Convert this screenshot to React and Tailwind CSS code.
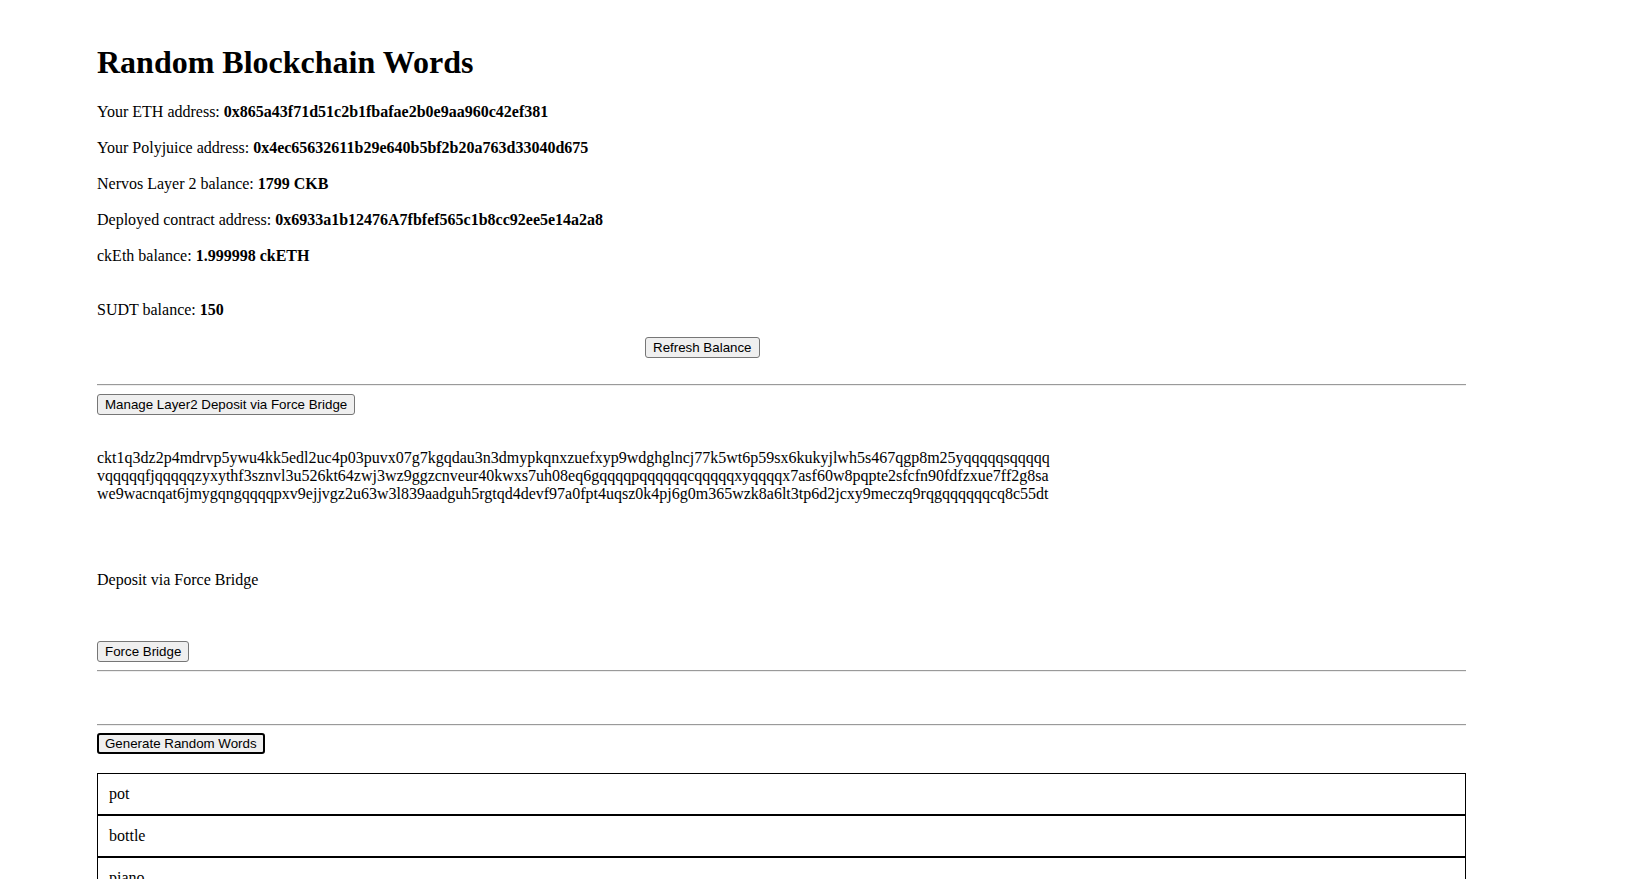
import React from 'react';

const base =
  'h-[21px] rounded-[3px] bg-[#efefef] text-[13.333px] leading-[17px] text-black font-["Liberation_Sans",Arial,sans-serif] whitespace-nowrap';
const btn = `${base} px-[7px] border border-[#767676]`;
const focusedBtn = `${base} px-[6px] border-2 border-black`;

const rule = 'h-[2px] border-t border-[#9a9a9a] border-b border-b-[#eeeeee]';

const words = ['pot', 'bottle', 'piano'];

const info = [
  ['Your ETH address: ', '0x865a43f71d51c2b1fbafae2b0e9aa960c42ef381'],
  ['Your Polyjuice address: ', '0x4ec65632611b29e640b5bf2b20a763d33040d675'],
  ['Nervos Layer 2 balance: ', '1799 CKB'],
  ['Deployed contract address: ', '0x6933a1b12476A7fbfef565c1b8cc92ee5e14a2a8'],
  ['ckEth balance: ', '1.999998 ckETH'],
];

const layer2 = [
  'ckt1q3dz2p4mdrvp5ywu4kk5edl2uc4p03puvx07g7kgqdau3n3dmypkqnxzuefxyp9wdghglncj77k5wt6p59sx6kukyjlwh5s467qgp8m25yqqqqqsqqqqq',
  'vqqqqqfjqqqqqzyxythf3sznvl3u526kt64zwj3wz9ggzcnveur40kwxs7uh08eq6gqqqqpqqqqqqcqqqqqxyqqqqx7asf60w8pqpte2sfcfn90fdfzxue7ff2g8sa',
  'we9wacnqat6jmygqngqqqqpxv9ejjvgz2u63w3l839aadguh5rgtqd4devf97a0fpt4uqsz0k4pj6g0m365wzk8a6lt3tp6d2jcxy9meczq9rqgqqqqqqcq8c55dt',
];

export default function App() {
  return (
    <div className='min-h-screen bg-white text-black font-["Liberation_Serif","Times_New_Roman",serif] text-[16px] leading-[18px]'>
      <div className="w-[1369px] ml-[97px] pt-[44px] flex flex-col">
        <h1 className="text-[32px] leading-[37px] font-bold">Random Blockchain Words</h1>

        {/* account info */}
        <div className="mt-[22px] flex flex-col gap-[18px]">
          {info.map(([label, value]) => (
            <p key={label}>
              {label}
              <b className="font-bold">{value}</b>
            </p>
          ))}
        </div>

        <p className="mt-[36px]">
          SUDT balance: <b className="font-bold">150</b>
        </p>

        <div className="mt-[18px] ml-[548px]">
          <button className={btn}>Refresh Balance</button>
        </div>

        <div className={`mt-[26px] ${rule}`} />

        <div className="mt-[8px]">
          <button className={btn}>Manage Layer2 Deposit via Force Bridge</button>
        </div>

        <div className="mt-[34px] leading-[17.75px] whitespace-nowrap">
          {layer2.map((line) => (
            <div key={line}>{line}</div>
          ))}
        </div>

        <p className="mt-[69px]">Deposit via Force Bridge</p>

        <div className="mt-[52px]">
          <button className={btn}>Force Bridge</button>
        </div>

        <div className={`mt-[8px] ${rule}`} />
        <div className={`mt-[52px] ${rule}`} />

        <div className="mt-[7px]">
          <button className={focusedBtn}>Generate Random Words</button>
        </div>

        {/* word list */}
        <div className="mt-[19px] flex flex-col">
          {words.map((w) => (
            <div key={w} className="border border-black px-[11px] py-[11px] leading-[18px]">
              {w}
            </div>
          ))}
        </div>
      </div>
    </div>
  );
}
